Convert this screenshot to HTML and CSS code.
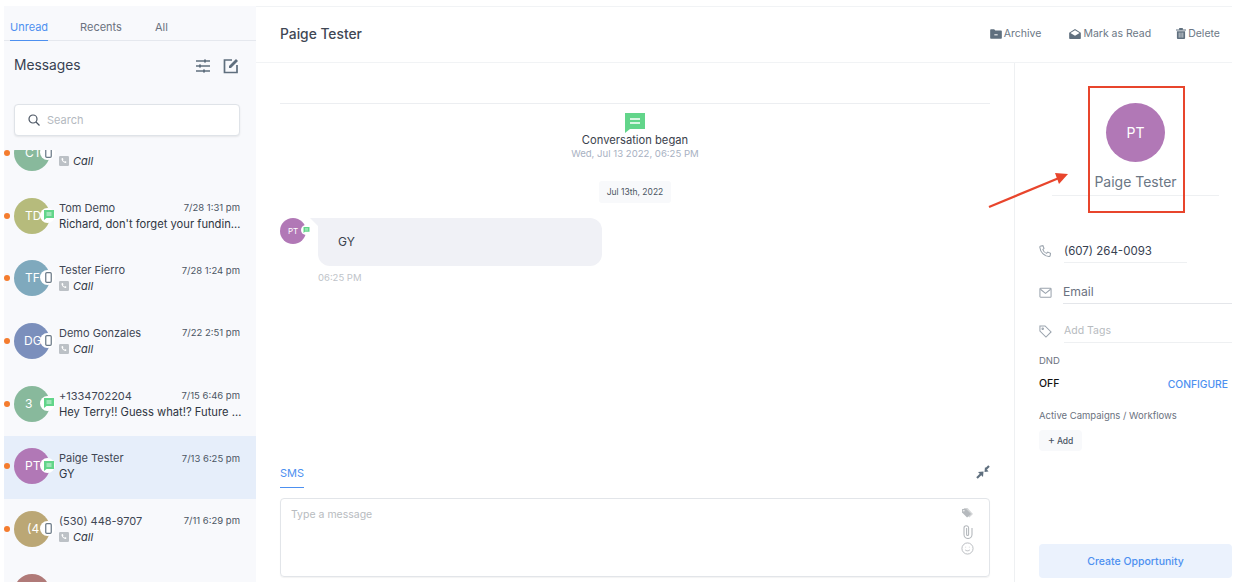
FILE: index.html
```html
<!DOCTYPE html>
<html lang="en">
<head>
<meta charset="utf-8">
<title>Messages</title>
<link rel="stylesheet" href="styles.css">
</head>
<body>
<svg class="defs" width="0" height="0" aria-hidden="true">
  <symbol id="i-chat" viewBox="0 0 20 20"><path d="M0 0h20v16H5l-5 4z" fill="#62d58a"/><path d="M5 6h10M5 10h10" stroke="#fff" stroke-width="1.6"/></symbol>
  <symbol id="i-mobile" viewBox="0 0 10 16"><rect x="1" y="1" width="8" height="14" rx="1.5" fill="none" stroke="#6b7a88" stroke-width="1.8"/></symbol>
  <symbol id="i-call" viewBox="0 0 12 12"><rect width="12" height="12" rx="1.5" fill="#bcc1c6"/><path d="M3.4 2.8l1.2-.3.8 1.7-.8.7c.3.8 1 1.5 1.9 1.9l.7-.8 1.7.8-.3 1.2c-.1.4-.5.6-.9.5C5.300 8 3.900 6.600 3 4c-.1-.5 0-1 .4-1.200z" fill="#fff"/></symbol>
</svg>
<div class="app">
  <aside class="sidebar">
    <nav class="tabs">
      <span class="tab tab-on">Unread</span>
      <span class="tab">Recents</span>
      <span class="tab">All</span>
    </nav>
    <div class="side-head">
      <h1 class="side-title">Messages</h1>
      <svg class="side-icon" viewBox="0 0 16 16" fill="none" stroke="#5f6f7e" stroke-width="1.300"><path d="M1 3h14M1 8h14M1 13h14"/><path d="M10 1.500v3M5 6.500v3M9 11.500v3" stroke-width="2"/></svg>
      <svg class="side-icon" viewBox="0 0 16 16" fill="none"><path d="M9 2H1.500v12.500H14V7" stroke="#5f6f7e" stroke-width="1.700"/><path d="M6 8l7-7 2 2-7 7H6z" fill="#5f6f7e"/></svg>
    </div>
    <div class="search">
      <svg class="search-icon" viewBox="0 0 12 12" fill="none" stroke="#4b5563" stroke-width="1.200"><circle cx="5" cy="5" r="4"/><path d="M8 8l3.500 3.500"/></svg>
      <span class="search-text">Search</span>
    </div>
    <div class="list">
      <div class="row row-first">
        <i class="dot"></i>
        <div class="avatar av-green">CT<span class="badge"><svg class="b-mobile"><use href="#i-mobile"/></svg></span></div>
        <div class="info"><div class="line"><span class="name">Chris Tester</span><span class="time">7/29 9:12 am</span></div><div class="sub"><svg class="call"><use href="#i-call"/></svg><em>Call</em></div></div>
      </div>
      <div class="row">
        <i class="dot"></i>
        <div class="avatar av-olive">TD<span class="badge"><svg class="b-chat"><use href="#i-chat"/></svg></span></div>
        <div class="info"><div class="line"><span class="name">Tom Demo</span><span class="time">7/28 1:31 pm</span></div><div class="sub"><span class="clip">Richard, don't forget your funding application today</span></div></div>
      </div>
      <div class="row">
        <i class="dot"></i>
        <div class="avatar av-blue">TF<span class="badge"><svg class="b-mobile"><use href="#i-mobile"/></svg></span></div>
        <div class="info"><div class="line"><span class="name">Tester Fierro</span><span class="time">7/28 1:24 pm</span></div><div class="sub"><svg class="call"><use href="#i-call"/></svg><em>Call</em></div></div>
      </div>
      <div class="row">
        <i class="dot"></i>
        <div class="avatar av-indigo">DG<span class="badge"><svg class="b-mobile"><use href="#i-mobile"/></svg></span></div>
        <div class="info"><div class="line"><span class="name">Demo Gonzales</span><span class="time">7/22 2:51 pm</span></div><div class="sub"><svg class="call"><use href="#i-call"/></svg><em>Call</em></div></div>
      </div>
      <div class="row">
        <i class="dot"></i>
        <div class="avatar av-green">3<span class="badge"><svg class="b-chat"><use href="#i-chat"/></svg></span></div>
        <div class="info"><div class="line"><span class="name">+1334702204</span><span class="time">7/15 6:46 pm</span></div><div class="sub"><span class="clip">Hey Terry!! Guess what!? Future is coming for you today</span></div></div>
      </div>
      <div class="row row-on">
        <i class="dot"></i>
        <div class="avatar av-purple">PT<span class="badge"><svg class="b-chat"><use href="#i-chat"/></svg></span></div>
        <div class="info"><div class="line"><span class="name">Paige Tester</span><span class="time">7/13 6:25 pm</span></div><div class="sub">GY</div></div>
      </div>
      <div class="row">
        <i class="dot"></i>
        <div class="avatar av-tan">(4<span class="badge"><svg class="b-mobile"><use href="#i-mobile"/></svg></span></div>
        <div class="info"><div class="line"><span class="name">(530) 448-9707</span><span class="time">7/11 6:29 pm</span></div><div class="sub"><svg class="call"><use href="#i-call"/></svg><em>Call</em></div></div>
      </div>
      <div class="row">
        <i class="dot"></i>
        <div class="avatar av-rose">(5</div>
        <div class="info"><div class="line"><span class="name">(530) 332-8877</span><span class="time">7/8 10:44 am</span></div></div>
      </div>
    </div>
  </aside>
  <main class="main">
    <header class="main-head">
      <h2 class="main-title">Paige Tester</h2>
      <div class="actions">
        <span class="action"><svg class="act-icon" viewBox="0 0 14 12"><path d="M0 1.500C0 .7.500.2 1.200.2h3.600l1.400 1.500h6.600c.7 0 1.200.5 1.200 1.200v7.700c0 .7-.5 1.200-1.200 1.200H1.200C.5 11.800 0 11.300 0 10.600z" fill="#5f6f7e"/><path d="M5 7h4" stroke="#fff" stroke-width="1.200"/></svg>Archive</span>
        <span class="action"><svg class="act-icon" viewBox="0 0 14 12"><path d="M7 0l7 4.500v6.300c0 .7-.5 1.200-1.200 1.200H1.200C.5 12 0 11.500 0 10.800V4.500z" fill="#5f6f7e"/><path d="M1.500 4.800L7 1.500l5.500 3.300L7 8z" fill="#fff"/></svg>Mark as Read</span>
        <span class="action action-del"><svg class="act-icon act-bin" viewBox="0 0 11 12"><path d="M0 1.500h11v1.300H0zM3.500 0h4v1.500h-4z" fill="#5f6f7e"/><path d="M1 3.500h9V11c0 .6-.4 1-1 1H2c-.6 0-1-.4-1-1z" fill="#5f6f7e"/><path d="M3.500 5v5.500M5.500 5v5.500M7.500 5v5.500" stroke="#fff" stroke-width=".7"/></svg>Delete</span>
      </div>
    </header>
    <div class="body">
      <section class="chat">
        <div class="thread">
          <div class="began">
            <svg class="began-icon"><use href="#i-chat"/></svg>
            <div class="began-text">Conversation began</div>
            <div class="began-date">Wed, Jul 13 2022, 06:25 PM</div>
          </div>
          <div class="day"><span class="day-pill">Jul 13th, 2022</span></div>
          <div class="msg">
            <div class="msg-avatar">PT<span class="msg-badge"><svg class="msg-chat"><use href="#i-chat"/></svg></span></div>
            <div class="msg-col">
              <div class="bubble">GY</div>
              <div class="msg-time">06:25 PM</div>
            </div>
          </div>
        </div>
        <div class="composer">
          <div class="comp-head">
            <span class="comp-tab">SMS</span>
            <svg class="collapse" viewBox="0 0 14 14" fill="#5f6f7e"><path d="M2 7l5.500-.5L7 12z"/><path d="M1 13l4-4" stroke="#5f6f7e" stroke-width="2.200"/><path d="M12.500 6.500L8.500 7l.5-5z"/><path d="M13 1L10 4" stroke="#5f6f7e" stroke-width="2.200"/></svg>
          </div>
          <div class="comp-box">
            <span class="comp-ph">Type a message</span>
            <div class="comp-tools">
              <svg class="tool" viewBox="0 0 12 11" fill="#b5b9bd"><path d="M2 0v4l5.500 6 .5.500L12 6.500 6 0z" opacity=".6"/><path d="M0 1v4l5.500 5.500L10 6.500 4.500 1z"/><circle cx="2" cy="3" r=".8" fill="#fff"/></svg>
              <svg class="tool tool-clip" viewBox="0 0 10 14" fill="none" stroke="#b5b9bd" stroke-width="1.100"><path d="M9 3v6.500a4 4 0 0 1-8 0V3a2.300 2.300 0 0 1 4.600 0v6.500a1 1 0 0 1-2 0V3"/></svg>
              <svg class="tool tool-face" viewBox="0 0 14 14" fill="none" stroke="#b5b9bd" stroke-width="1"><circle cx="7" cy="7" r="6"/><path d="M4.500 8.500c1.300 1.300 3.700 1.300 5 0M5 5.200v.6M9 5.200v.6"/></svg>
            </div>
          </div>
        </div>
      </section>
      <aside class="panel">
        <div class="contact">
          <div class="contact-avatar">PT</div>
          <div class="contact-name">Paige Tester</div>
        </div>
        <div class="field field-phone">
          <svg class="f-icon" viewBox="0 0 14 14" fill="none" stroke="#9aa3ad" stroke-width="1.100"><path d="M2 1l2.200-.3 1.200 3-1.300 1.200c.6 1.700 2.200 3.400 4 4.100l1.300-1.300 3 1.200-.3 2.300c-.1.800-.8 1.300-1.500 1.200C5.500 12 1.600 8 .9 2.500.8 1.800 1.300 1.100 2 1z"/></svg>
          <span class="f-val">(607) 264-0093</span>
        </div>
        <div class="field field-email">
          <svg class="f-icon" viewBox="0 0 14 12" fill="none" stroke="#9aa3ad" stroke-width="1.100"><rect x="1" y="1.500" width="12" height="9.500" rx=".8"/><path d="M1.500 2.500L7 7l5.500-4.500"/></svg>
          <span class="f-val f-email">Email</span>
        </div>
        <div class="field field-tags">
          <svg class="f-icon" viewBox="0 0 14 14" fill="none" stroke="#9aa3ad" stroke-width="1.100"><path d="M1 1h5.500L13 7.500 7.500 13 1 6.500z"/><circle cx="4" cy="4" r=".8"/></svg>
          <span class="f-val f-tags">Add Tags</span>
        </div>
        <div class="label label-dnd">DND</div>
        <div class="dnd"><span class="off">OFF</span><span class="config">CONFIGURE</span></div>
        <div class="label label-camp">Active Campaigns / Workflows</div>
        <div class="add"><span class="add-plus">+</span>Add</div>
        <div class="opp">Create Opportunity</div>
      </aside>
    </div>
  </main>
</div>
<div class="mark-box"></div>
<svg class="mark-arrow" viewBox="0 0 84 40" fill="none"><path d="M2 37L72 8" stroke="#e8452c" stroke-width="2.200"/><path d="M81 4L68 3l4 11z" fill="#e8452c"/></svg>
</body>
</html>
```
FILE: styles.css
```css
* { box-sizing: border-box; }
html, body { margin: 0; height: 100%; overflow: hidden; background: #fff; }
body { font-family: Inter, "Liberation Sans", sans-serif; color: #374151; position: relative; }
.defs { position: absolute; }
h1, h2 { margin: 0; font-weight: 400; }

.app { display: flex; height: 588px; padding: 6px 2px 6px 4px; }

.sidebar { width: 252px; flex: none; background: #f8f9fc; display: flex; flex-direction: column; overflow: hidden; }
.tabs { display: flex; height: 35px; gap: 32px; padding-left: 6px; border-bottom: 1px solid #e5e8ee; }
.tab { font-size: 11px; line-height: 14px; padding-top: 14px; height: 34px; color: #6b7280; }
.tab:nth-child(3) { margin-left: 1px; }
.tab-on { color: #4d90f0; border-bottom: 1.500px solid #4d90f0; height: 35px; }
.side-head { display: flex; align-items: center; height: 50px; padding: 0 17px 2px 10px; }
.side-title { font-size: 13.800px; color: #374151; flex: 1; }
.side-icon { width: 16px; height: 16px; margin-left: 12px; position: relative; top: 1px; }
.search { margin: 13px 16px 0 10px; height: 32px; background: #fff; border: 1px solid #dfe3e8; border-radius: 4px; box-shadow: 0 1px 2px rgba(0,0,0,.08); display: flex; align-items: center; padding-left: 13px; flex: none; }
.search-icon { width: 12px; height: 12px; }
.search-text { font-size: 11px; color: #b4b9c0; margin-left: 7px; }
.list { margin-top: 14px; flex: 1; overflow: hidden; }
.row { height: 62.700px; display: flex; align-items: center; padding: 0 16px 2px 0; }
.row-first { margin-top: -27.500px; }
.row-on { background: #e6eefa; }
.dot { width: 6px; height: 6px; border-radius: 50%; background: #f47c2e; flex: none; }
.avatar { width: 36px; height: 36px; margin-left: 4px; border-radius: 50%; color: #fff; font-size: 12px; line-height: 36px; flex: none; position: relative; text-align: left; padding-left: 11px; }
.av-green { background: #88b99c; }
.av-olive { background: #b6bb7c; }
.av-blue { background: #7fa9bd; }
.av-indigo { background: #7b8fbc; padding-left: 10px; }
.av-purple { background: #b178b6; }
.av-tan { background: #bba775; padding-left: 13px; }
.av-rose { background: #b07a78; }
.badge { position: absolute; left: 26px; top: 10px; width: 15px; height: 15px; border-radius: 50%; background: #fff; display: flex; align-items: center; justify-content: center; }
.b-chat { width: 10px; height: 10px; margin-left: 2px; }
.b-mobile { width: 7px; height: 11px; margin-left: 1px; }
.info { flex: 1; min-width: 0; margin-left: 9px; }
.line { display: flex; justify-content: space-between; align-items: center; height: 16px; }
.name { font-size: 11px; color: #3f4754; }
.time { font-size: 9.500px; color: #4b5563; white-space: nowrap; }
.sub { height: 16px; line-height: 16px; font-size: 11.200px; color: #2f3642; display: flex; align-items: center; width: 184px; }
.sub em { margin-left: 4px; font-style: italic; font-size: 11px; }
.clip { overflow: hidden; white-space: nowrap; text-overflow: ellipsis; }
.call { width: 10px; height: 10px; }

.main { flex: 1; min-width: 0; display: flex; flex-direction: column; }
.main-head { height: 57px; flex: none; display: flex; align-items: center; justify-content: space-between; padding: 0 12px 2px 24px; border-top: 1px solid #f1f3f5; border-bottom: 1px solid #f1f3f5; }
.main-title { font-size: 13.800px; font-weight: 500; color: #3f4754; }
.actions { display: flex; gap: 28px; }
.action { display: flex; align-items: center; font-size: 10.500px; color: #6b7785; }
.action-del { margin-left: -3px; }
.act-icon { width: 12px; height: 10px; margin-right: 2px; }
.act-bin { width: 10px; height: 11px; }

.body { flex: 1; display: flex; min-height: 0; }
.chat { width: 759px; flex: none; border-right: 1px solid #eef0f2; padding: 0 24px; display: flex; flex-direction: column; justify-content: space-between; }
.thread { margin-top: 40px; border-top: 1px solid #eceef1; padding-top: 9px; }
.began { display: flex; flex-direction: column; align-items: center; }
.began-icon { width: 20px; height: 20px; display: block; }
.began-text { font-size: 11.200px; line-height: 14px; color: #3a414c; }
.began-date { font-size: 9.600px; line-height: 14px; color: #a8b1c2; }
.day { text-align: center; margin-top: 18px; }
.day-pill { display: inline-block; font-size: 8.500px; line-height: 22px; padding: 0 8px; background: #f8f9fb; border-radius: 3px; color: #4b5563; }
.msg { display: flex; margin-top: 15px; }
.msg-avatar { width: 26px; height: 26px; border-radius: 50%; background: #b178b6; color: #fff; font-size: 8px; line-height: 26px; padding-left: 8px; position: relative; flex: none; }
.msg-badge { position: absolute; left: 21px; top: 7px; width: 10px; height: 10px; background: #fff; border-radius: 50%; }
.msg-chat { position: absolute; left: 2px; top: 2px; width: 7px; height: 6px; }
.msg-col { margin-left: 12px; }
.bubble { position: relative; width: 284px; height: 48px; background: #f0f1f6; border-radius: 12px; border-top-left-radius: 0; font-size: 12px; line-height: 48px; padding-left: 20px; color: #3a414c; }
.bubble::before { content: ""; position: absolute; left: -8px; top: 0; width: 8px; height: 8px; background: #f0f1f6; clip-path: polygon(0 0, 100% 0, 100% 100%); }
.msg-time { font-size: 9.500px; line-height: 14px; margin-top: 5px; color: #c0c4ca; }

.composer { margin-bottom: 5px; }
.comp-head { display: flex; justify-content: space-between; align-items: flex-start; height: 31px; }
.comp-tab { font-size: 11px; line-height: 13px; color: #4d90f0; width: 24px; height: 21px; border-bottom: 1.500px solid #4d90f0; }
.collapse { width: 14px; height: 14px; margin-top: -2px; }
.comp-box { height: 79px; border: 1px solid #e2e5e9; border-radius: 4px; padding: 9px 10px; display: flex; justify-content: space-between; box-shadow: 0 1px 1px rgba(0,0,0,.05); }
.comp-ph { font-size: 10.500px; line-height: 13px; color: #b7bbc0; }
.comp-tools { display: flex; flex-direction: column; align-items: center; margin-right: 5px; }
.tool { width: 11px; height: 10px; display: block; }
.tool-clip { width: 10px; height: 14px; margin-top: 7px; }
.tool-face { width: 13px; height: 13px; margin-top: 3px; }

.panel { flex: 1; min-width: 0; position: relative; padding-left: 24px; display: flex; flex-direction: column; }
.contact { margin: 40px 13px 0 13px; text-align: center; border-bottom: 1px solid #eef0f2; height: 93px; }
.contact-avatar { width: 59px; height: 59px; margin: 0 auto; border-radius: 50%; background: #b178b6; color: #fff; font-size: 14px; line-height: 59px; }
.contact-name { font-size: 14px; line-height: 18px; margin-top: 11px; color: #6b7785; }
.field { display: flex; align-items: center; }
.f-icon { width: 13px; height: 13px; flex: none; }
.f-val { display: block; margin-left: 12px; flex: 1; font-size: 11.500px; line-height: 22px; border-bottom: 1px solid #eef0f2; }
.field-phone { margin-top: 44px; padding-right: 45px; }
.field-email { margin-top: 18px; }
.field-email .f-val { border-bottom-color: #e4e6ea; }
.f-email { font-size: 12.200px; color: #6b7280; margin-left: 11px; }
.field-tags { margin-top: 15px; }
.f-tags { font-size: 10.500px; color: #b7bbc0; line-height: 23px; }
.label { font-size: 9.500px; line-height: 12px; color: #6b7280; }
.label-dnd { margin-top: 12px; }
.dnd { display: flex; justify-content: space-between; align-items: center; margin-top: 10px; padding-right: 4px; }
.off { font-size: 10.500px; font-weight: 500; color: #111; }
.config { font-size: 10.300px; font-weight: 500; color: #4d90f0; }
.label-camp { margin-top: 20px; }
.add { width: 43px; height: 21px; margin-top: 8px; background: #f8f9fb; border-radius: 4px; font-size: 8.500px; line-height: 21px; color: #4b5563; text-align: center; font-weight: 500; }
.add-plus { font-size: 11px; font-weight: 400; margin-right: 2px; }
.opp { margin-top: auto; margin-bottom: 4px; height: 34px; padding-top: 1px; background: #ebf2fd; border-radius: 4px; color: #4d90f0; font-size: 10.500px; font-weight: 500; line-height: 34px; text-align: center; }

.mark-box { position: absolute; left: 1088px; top: 86px; width: 97px; height: 127px; border: 2px solid #e8452c; }
.mark-arrow { position: absolute; left: 987px; top: 170px; width: 84px; height: 40px; }
```
